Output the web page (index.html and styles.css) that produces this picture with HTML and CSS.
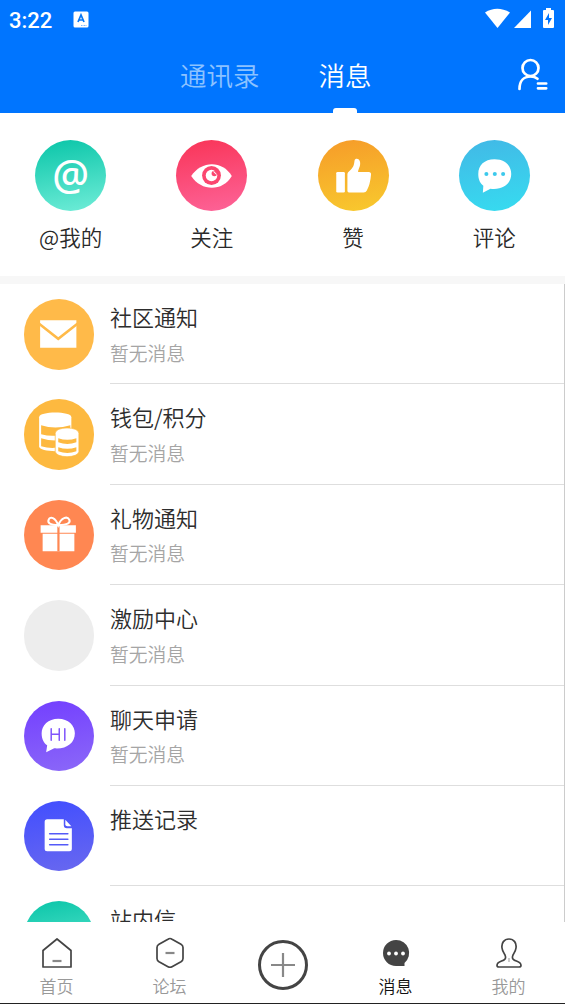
FILE: index.html
```html
<!DOCTYPE html>
<html lang="zh-CN">
<head>
<meta charset="utf-8">
<title>消息</title>
<link rel="stylesheet" href="styles.css">
</head>
<body>
<div class="app">
  <header class="header">
    <div class="status">
      <span class="clock">3:22</span>
      <svg class="keyboard" width="16" height="17" viewBox="0 0 16 17"><rect x=".5" y=".5" width="15" height="16" rx="1.500" fill="#fff"/><path d="M5 11 8 4l3 7M6.200 9h3.600" fill="none" stroke="#0877f5" stroke-width="1.700"/><path d="M8 14.500h6" stroke="#7db8ff" stroke-dasharray="1 .5"/></svg>
      <svg class="signals" width="70" height="22" viewBox="0 0 70 22" fill="#fff"><path d="M0 4.500Q12 -3 25 4.500L12.500 20Z"/><path d="M46 2.500V20H29Z"/><path d="M61 0h5v2h2q1 0 1 1v16q0 1-1 1h-9q-1 0-1-1V3q0-1 1-1h2Z"/><path d="M64 5v5h3l-4 7v-5h-3Z" fill="#0075ff"/></svg>
    </div>
    <nav class="tabs">
      <span class="tab">通讯录</span>
      <span class="tab tab-active">消息</span>
      <svg class="contacts" width="32" height="34" viewBox="0 0 32 34" fill="none" stroke="#fff" stroke-width="2.700" stroke-linecap="round"><circle cx="13.500" cy="10" r="8"/><path d="M2.500 31C2.500 23 7 18.500 13.500 18.500c3 0 5 .6 7 2.200M21 25.500h8.200M21 30.300h8.200"/></svg>
    </nav>
  </header>

  <section class="shortcuts">
    <div class="shortcut"><div class="disc teal"><span class="at">@</span></div><span>@我的</span></div>
    <div class="shortcut"><div class="disc pink"><svg viewBox="0 0 70 70"><path d="M15 35.500C25 20 46 20 55 35.500C46 51 25 51 15 35.500Z" fill="#fff"/><circle cx="35" cy="35" r="9.300" fill="#fb4770"/><circle cx="35" cy="35" r="5.700" fill="#fff"/><circle cx="37.800" cy="33" r="2.700" fill="#fb4770"/><path d="m37 31 3 3" stroke="#fff" stroke-width="1"/></svg></div><span>关注</span></div>
    <div class="shortcut"><div class="disc amber"><svg viewBox="0 0 70 70" fill="#fff"><rect x="18" y="31.500" width="8.500" height="20.300" rx="1.300"/><path d="M29 33.500Q29 32 31 30.500C35 27 35.500 25 36 20.500C36.500 17.500 41 18 41.500 22C42 26 40 28 39.500 31.500H50Q52.500 31.500 52.300 34Q51.500 44 48 50Q47.200 51.800 45 51.800H30.500Q29 51.800 29 50Z"/></svg></div><span>赞</span></div>
    <div class="shortcut"><div class="disc cyan"><svg viewBox="0 0 70 70"><path d="M35 19C25 19 19 25 19 33.500C19 39 21 43 24 45L23.500 52L31 48C43 49.500 51.500 43 51.500 33.500C51.500 25 45 19 35 19Z" fill="#fff"/><g fill="#3cc9ec"><circle cx="27" cy="33.500" r="2"/><circle cx="35.300" cy="33.500" r="2"/><circle cx="43.500" cy="33.500" r="2"/></g></svg></div><span>评论</span></div>
  </section>

  <main class="list">
    <article class="row"><div class="disc yellow"><svg viewBox="0 0 70 70"><path d="M17 21H53V48.500H17Z" fill="#fff"/><path d="M16 24.500 35 39.500 54 24.500" fill="none" stroke="#ffba49" stroke-width="2.500"/></svg></div><div class="copy"><h2>社区通知</h2><p>暂无消息</p></div></article>
    <article class="row"><div class="disc gold"><svg viewBox="0 0 70 70"><path d="M16 18C16 12 48 12 48 18V47C48 53.500 16 53.500 16 47Z" fill="#fff"/><g fill="#fdb940"><path d="M18 26Q32 30.500 47 26V33Q32 39 18 35Z"/><path d="M18 39Q32 43.500 46 39V45Q32 51 18 47Z"/></g><path d="M32 34C32 27 55.500 27 55.500 34V52C55.500 59 32 59 32 52Z" fill="#fff" stroke="#fdb940" stroke-width=".7"/><g fill="#fdb940"><path d="M35 39Q44 42 53 39V43Q44 46.500 35 43Z"/><path d="M35 48Q44 51 53 48V52Q44 55 35 52Z"/></g></svg></div><div class="copy"><h2>钱包/积分</h2><p>暂无消息</p></div></article>
    <article class="row"><div class="disc orange"><svg viewBox="0 0 70 70"><path d="M17.500 26H52.500V33.500H17.500ZM19.500 34.500H51V52H19.500Z" fill="#fff"/><path d="M35.200 27V52" stroke="#ff8752" stroke-width="2.200"/><path d="M35 26C32 18 27 17 25.500 20.500C24 24 27 25.500 35 26C44 25.500 47.500 24 46 20.500C44 17 38 18 35 26Z" fill="none" stroke="#fff" stroke-width="2"/></svg></div><div class="copy"><h2>礼物通知</h2><p>暂无消息</p></div></article>
    <article class="row"><div class="disc blank"></div><div class="copy"><h2>激励中心</h2><p>暂无消息</p></div></article>
    <article class="row"><div class="disc violet"><svg viewBox="0 0 70 70"><path d="M35 18.500C25 18.500 18.500 25 18.500 33C18.500 39 21 43 24 45L23 52L31 48C43 49 51.500 43 51.500 33C51.500 25 45 18.500 35 18.500Z" fill="#fff"/><path d="M28 28.500v11.500M36 28.500v11.500M28 34h8M41.500 28.500v11.500" stroke="#8055fb" stroke-width="1.500" stroke-linecap="round"/></svg></div><div class="copy"><h2>聊天申请</h2><p>暂无消息</p></div></article>
    <article class="row"><div class="disc blue"><svg viewBox="0 0 70 70"><path d="M24 19H40.500V25Q40.500 28 43.500 28H48.500V48.500Q48.500 51 46 51H24Q21.500 51 21.500 48.500V21.500Q21.500 19 24 19Z" fill="#fff"/><path d="M42 19.500 48 26H44Q42 26 42 24Z" fill="#fff"/><path d="M26.500 33.500H44.500M26.500 39H44.500M26.500 44.500H44.500" stroke="#555af8" stroke-width="1.600" stroke-linecap="round"/></svg></div><div class="copy"><h2>推送记录</h2></div></article>
    <article class="row"><div class="disc teal"></div><div class="copy"><h2>站内信</h2></div></article>
  </main>

  <nav class="bottom">
    <div class="item"><svg viewBox="0 0 34 34"><path d="M17 3 31 14.500V31H3V14.500Z"/><path class="mark" d="M12.500 25h9"/></svg><span>首页</span></div>
    <div class="item"><svg viewBox="0 0 34 34"><path d="M17 2.500Q18 2.500 19 3.200L28 8.300Q30 9.500 30 11.500V22.500Q30 24.500 28 25.700L19 30.700Q17 31.800 15 30.700L6 25.700Q4 24.500 4 22.500V11.500Q4 9.500 6 8.300L15 3.200Q16 2.500 17 2.500Z"/><path class="mark" d="M12.500 17h9"/></svg><span>论坛</span></div>
    <div class="item add"><svg viewBox="0 0 52 52"><circle cx="26" cy="26" r="23.500"/><path class="mark" d="M14 26h24M26 14v24"/></svg></div>
    <div class="item selected"><svg viewBox="0 0 34 34"><path d="M17 4A13 13 0 1 0 17 30H25.500V27A13 13 0 0 0 17 4Z" fill="#444" stroke="none"/><g fill="#fff" stroke="none"><circle cx="10" cy="17.500" r="1.900"/><circle cx="17" cy="17.500" r="1.900"/><circle cx="24" cy="17.500" r="1.900"/></g></svg><span>消息</span></div>
    <div class="item"><svg viewBox="0 0 34 34"><path d="M17 3C12 3 9.300 7 10 12C10.300 15 12 17 13 19C14.500 22.500 13 24 9 25.300C6 26.300 5 28 5 29.500Q5 31 7 31H27Q29 31 29 29.500C29 28 28 26.300 25 25.300C21 24 19.500 22.500 21 19C22 17 23.700 15 24 12C24.700 7 22 3 17 3Z"/><path class="fine" d="M17 22v4"/></svg><span>我的</span></div>
  </nav>
</div>
</body>
</html>
```
FILE: styles.css
```css
* { box-sizing: border-box; }
body { margin: 0; font-family: "Noto Sans CJK SC", sans-serif; font-weight: 350; background: #fff; color: #333; }
.app { width: 565px; height: 1004px; display: flex; flex-direction: column; overflow: hidden; }
.header { height: 113px; flex: none; background: #0075ff; color: #fff; }
.status { height: 39px; display: flex; align-items: center; padding: 0 10px 0 9px; }
.clock { font: 500 22px/39px Roboto, sans-serif; width: 64px; padding-top: 1px; }
.keyboard { margin-top: -1px; }
.signals { margin-left: auto; margin-top: -1px; }
.tabs { height: 74px; display: flex; padding-left: 180px; padding-right: 16px; }
.tab { font-size: 26.5px; line-height: 72px; height: 74px; color: #8cc2ff; white-space: nowrap; }
.tab-active { margin-left: 59px; color: #fff; position: relative; }
.tab-active::after { content: ""; position: absolute; left: 14.5px; bottom: 0; width: 24px; height: 5px; border-radius: 3px 3px 0 0; background: #fff; }
.contacts { margin-left: auto; margin-top: 19px; }
.shortcuts { height: 163px; flex: none; display: grid; grid-template-columns: repeat(4, 1fr); padding-top: 27px; }
.shortcut { display: flex; flex-direction: column; align-items: center; font-size: 21.5px; line-height: 32px; color: #2a2a2a; }
.shortcut .disc { margin-bottom: 10px; }
.disc { width: 71px; height: 71px; border-radius: 50%; flex: none; overflow: hidden; }
.disc svg { display: block; width: 100%; height: 100%; }
.teal { background: linear-gradient(170deg, #09c5a8, #70edd8); }
.pink { background: linear-gradient(170deg, #f93457, #fd6499); }
.amber { background: linear-gradient(170deg, #f69b29, #f8ca2e); }
.cyan { background: linear-gradient(170deg, #42b8e6, #36dcf0); }
.at { display: block; text-align: center; color: #fff; font: 500 41px/68px "Noto Sans", sans-serif; }
.list { flex: 1; min-height: 0; overflow: hidden; border-top: 8px solid #f7f7f7; position: relative; }
.list::after { content: ""; position: absolute; right: 0; top: 0; bottom: 0; width: 1px; background: #ccc; }
.row { height: 100.4px; display: flex; padding-left: 23.5px; }
.row .disc { width: 70.5px; height: 70.5px; margin: 15px 16px 0 0; }
.row .disc svg { margin-left: -0.5px; margin-top: -0.5px; }
.copy { flex: 1; border-bottom: 1px solid #dedede; padding-top: 16px; }
h2 { margin: 0; font-size: 22px; line-height: 32px; font-weight: 350; color: #2d2d2d; }
p { margin: 6.6px 0 0; font-size: 18.8px; line-height: 28px; color: #a5a5a5; }
.yellow { background: #ffba49; }
.gold { background: #fdb940; }
.orange { background: #ff8752; }
.blank { background: #ededed; }
.violet { background: linear-gradient(170deg, #733fff, #8b68f8); }
.blue { background: linear-gradient(170deg, #414eff, #6968ef); }
.bottom { height: 82px; flex: none; display: grid; grid-template-columns: repeat(5, 1fr); border-bottom: 1px solid #222; background: #fff; }
.item { display: flex; flex-direction: column; align-items: center; padding-top: 14px; font-size: 17px; line-height: 25px; color: #999; }
.item svg { width: 34px; height: 34px; fill: none; stroke: #444; stroke-width: 1.7; stroke-linejoin: round; }
.item span { margin-top: 3px; }
.item .mark { stroke: #888; stroke-width: 2.2; }
.item .fine { stroke: #999; stroke-width: 1; }
.item.add { padding-top: 17px; }
.item.add svg { width: 52px; height: 52px; stroke-width: 3; }
.selected { color: #111; }
```
